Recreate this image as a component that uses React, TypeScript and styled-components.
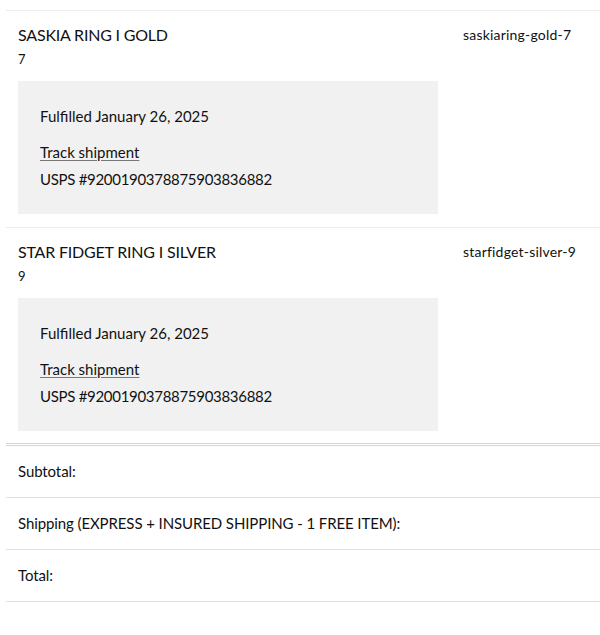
import React from 'react';
import styled, { createGlobalStyle } from 'styled-components';

const GlobalStyle = createGlobalStyle`
  body {
    margin: 0;
    background: #fff;
    font-family: Lato, 'Open Sans', sans-serif;
    color: #111;
  }
`;

const Page = styled.div`
  margin-left: 6px;
  padding-top: 10px;
`;

const ItemRow = styled.div`
  display: grid;
  grid-template-columns: 433px 1fr;
  column-gap: 12px;
  padding: 12px 12px 13px;
  border-top: 1px solid #ececec;
  &:last-of-type {
    padding-bottom: 12px;
    border-bottom: 3px double #d4d4d4;
  }
`;

const ProductName = styled.div`
  font-size: 16px;
  line-height: 24px;
  letter-spacing: -0.2px;
  text-transform: uppercase;
`;

const Variant = styled.div`
  font-size: 13px;
  line-height: 18px;
  margin-top: 3px;
`;

const Sku = styled.div`
  font-size: 14px;
  line-height: 24px;
  letter-spacing: 0.2px;
`;

const Fulfillment = styled.div`
  width: 420px;
  box-sizing: border-box;
  margin-top: 13px;
  padding: 24px 22px;
  background: #f1f1f1;
  font-size: 15px;
  line-height: 22px;
`;

const TrackLink = styled.a`
  display: block;
  width: fit-content;
  margin-top: 14px;
  color: #111;
  text-decoration: underline;
  text-decoration-color: #777;
  text-underline-offset: 2px;
`;

const Tracking = styled.div`
  margin-top: 5px;
  letter-spacing: -0.3px;
`;

const TotalRow = styled.div`
  padding: 12px 12px;
  font-size: 15px;
  line-height: 27px;
  letter-spacing: -0.1px;
  border-bottom: 1px solid #e2e2e2;
`;

const items = [
  { name: 'Saskia Ring I Gold', variant: '7', sku: 'saskiaring-gold-7' },
  { name: 'Star Fidget Ring I Silver', variant: '9', sku: 'starfidget-silver-9' },
];

export default function App() {
  return (
    <Page>
      <GlobalStyle />
      <div>
        {items.map((item) => (
          <ItemRow key={item.sku}>
            <div>
              <ProductName>{item.name}</ProductName>
              <Variant>{item.variant}</Variant>
              <Fulfillment>
                <div>Fulfilled January 26, 2025</div>
                <TrackLink href="#">Track shipment</TrackLink>
                <Tracking>USPS #9200190378875903836882</Tracking>
              </Fulfillment>
            </div>
            <Sku>{item.sku}</Sku>
          </ItemRow>
        ))}
      </div>
      <TotalRow>Subtotal:</TotalRow>
      <TotalRow>Shipping (EXPRESS + INSURED SHIPPING - 1 FREE ITEM):</TotalRow>
      <TotalRow>Total:</TotalRow>
    </Page>
  );
}
